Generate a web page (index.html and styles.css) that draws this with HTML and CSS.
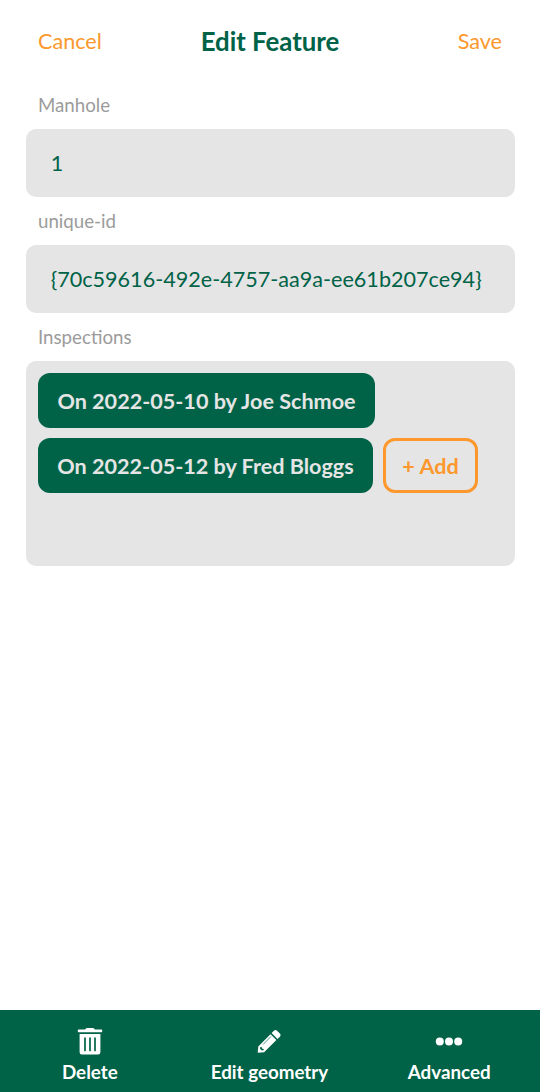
FILE: index.html
```html
<!DOCTYPE html>
<html lang="en">
<head>
<meta charset="utf-8">
<title>Edit Feature</title>
<link rel="stylesheet" href="styles.css">
</head>
<body>
<div class="screen">
  <header class="header">
    <span class="action">Cancel</span>
    <h1 class="title">Edit Feature</h1>
    <span class="action save">Save</span>
  </header>
  <main class="form">
    <div class="label">Manhole</div>
    <div class="field">1</div>
    <div class="label">unique-id</div>
    <div class="field">{70c59616-492e-4757-aa9a-ee61b207ce94}</div>
    <div class="label">Inspections</div>
    <div class="relations">
      <div class="chip chip-joe">On 2022-05-10 by Joe Schmoe</div>
      <div class="chip chip-fred">On 2022-05-12 by Fred Bloggs</div>
      <div class="chip add">+ Add</div>
    </div>
  </main>
  <footer class="toolbar">
    <div class="tool">
      <svg class="icon" width="26" height="28" viewBox="0 0 26 28"><path fill="#fff" d="M.8 4.500V3.300q0-.8.8-.8h6.600l.7-1q.4-.6 1.100-.6h6q.7 0 1.100.6l.7 1h6.600q.8 0 .8.800v1.200q0 .8-.8.800H1.600q-.8 0-.8-.8zM2.600 7h20.800v18.200q0 2.300-2.300 2.300H4.900q-2.300 0-2.300-2.300z"/><path stroke="#006347" stroke-width="1.700" stroke-linecap="round" d="M8 11v12.500M13 11v12.500M18 11v12.500"/></svg>
      <span>Delete</span>
    </div>
    <div class="tool">
      <svg class="icon" width="26" height="28" viewBox="0 0 26 28"><path fill="#fff" d="M1.700 25.800l.6-6.400L14.500 7.200l5.900 5.900L8.100 25.300zM15.600 6.100l2.600-2.600q1.300-1.100 2.600 0l3.300 3.300q1.100 1.300 0 2.600L21.500 12z"/><path fill="none" stroke="#006347" stroke-width=".7" d="M7 17.500l8-8"/><path fill="#006347" d="M4.300 20l1.300-.3.400 1.800 1.800.4-.3 1.300-1.600.4-1.900-1.900z"/></svg>
      <span>Edit geometry</span>
    </div>
    <div class="tool">
      <svg class="icon" width="28" height="28" viewBox="0 0 28 28"><g fill="#fff"><circle cx="4.800" cy="14.500" r="4"/><circle cx="14" cy="14.500" r="4"/><circle cx="23.200" cy="14.500" r="4"/></g></svg>
      <span>Advanced</span>
    </div>
  </footer>
</div>
</body>
</html>
```
FILE: styles.css
```css
* { box-sizing: border-box; }
body { margin: 0; background: #fff; font-family: Lato, sans-serif; }
.screen { height: 1092px; display: flex; flex-direction: column; }
.header { height: 82px; padding: 0 38px; display: grid; grid-template-columns: 1fr auto 1fr; align-items: center; }
.action { color: #fc982d; font-size: 21.6px; }
.save { text-align: right; }
.title { margin: 0; color: #006347; font-size: 25.8px; font-weight: 700; }
.form { flex: 1; padding: 0 25.5px; }
.label { height: 48px; padding: 0 12.5px; line-height: 48px; color: #9b9b9b; font-size: 18.7px; }
.label:first-child { height: 47px; line-height: 46px; }
.field { height: 68px; padding: 0 25.2px; line-height: 69px; border-radius: 10px; background: #e5e5e5; color: #006347; font-size: 21.6px; white-space: nowrap; }
.relations { height: 205px; padding: 12.4px 12.5px; display: flex; flex-wrap: wrap; align-content: flex-start; gap: 10px; border-radius: 10px; background: #e5e5e5; }
.chip { height: 55px; line-height: 56px; border-radius: 12px; background: #006347; color: #e5e5e5; font-size: 21.6px; font-weight: 700; text-align: center; white-space: nowrap; }
.chip-joe { width: 337px; }
.chip-fred { width: 335px; }
.add { width: 95px; line-height: 50px; border: 3px solid #fc982d; background: transparent; color: #fc982d; }
.toolbar { height: 82px; padding: 17px 1px 0 0; display: grid; grid-template-columns: repeat(3, 1fr); background: #006347; }
.tool { display: flex; flex-direction: column; align-items: center; color: #fff; font-size: 18.8px; font-weight: 700; line-height: 34px; }
.icon { display: block; }
```
